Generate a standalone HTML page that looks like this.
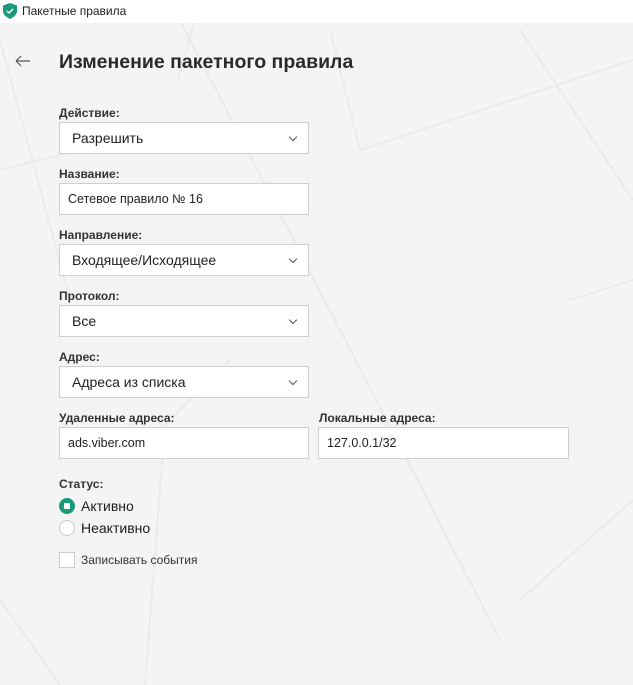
<!DOCTYPE html>
<html><head><meta charset="utf-8"><style>
*{margin:0;padding:0;box-sizing:border-box}
body{width:633px;height:685px;background:#f4f4f4;font-family:"Liberation Sans",sans-serif;position:relative;overflow:hidden;color:#1d1d1b}
.tb{position:absolute;left:0;top:0;width:633px;height:23px;background:#fff;font-size:12px;}
.tb span{position:absolute;left:22px;top:4px}
.lbl{position:absolute;left:59px;font-size:12px;font-weight:bold;color:#333}
.f{position:absolute;height:32px;background:#fff;border:1px solid #cfcfcf;font-size:14px;padding-left:12px;line-height:30px;color:#222}
.f.s{font-size:12.5px;padding-left:8px}
.chev{position:absolute;right:12px;top:11px;width:6px;height:6px;border-right:1px solid #555;border-bottom:1px solid #555;transform:rotate(45deg)}
svg.bg{position:absolute;left:0;top:0}
</style></head><body>
<svg class="bg" width="633" height="685"><g stroke="#eaeaea" stroke-width="2" fill="none">
<line x1="0" y1="40" x2="70" y2="300"/><line x1="180" y1="20" x2="500" y2="640"/><line x1="120" y1="140" x2="0" y2="170"/><line x1="178" y1="80" x2="200" y2="0"/>
<line x1="330" y1="30" x2="360" y2="150"/><line x1="360" y1="150" x2="633" y2="60"/><line x1="520" y1="30" x2="633" y2="200"/><line x1="610" y1="20" x2="633" y2="0"/>
<line x1="165" y1="425" x2="145" y2="685"/><line x1="165" y1="425" x2="230" y2="360"/><line x1="570" y1="300" x2="633" y2="280"/><line x1="520" y1="600" x2="633" y2="500"/>
<line x1="0" y1="600" x2="60" y2="685"/></g></svg>
<div class="tb"><svg style="position:absolute;left:3px;top:3px" width="14" height="16" viewBox="0 0 14 16"><path d="M7 0L14 2.5V8C14 12 10 14.5 7 16C4 14.5 0 12 0 8V2.5Z" fill="#1a9a7a"/><path d="M4 8l2 2 4-4" stroke="#fff" stroke-width="1.5" fill="none"/></svg><span>Пакетные правила</span></div>
<svg style="position:absolute;left:15px;top:55px" width="16" height="12"><path d="M1 6H15M1 6L6 1M1 6L6 11" stroke="#555" stroke-width="1.2" fill="none"/></svg>
<div style="position:absolute;left:59px;top:51px;font-size:19.5px;font-weight:bold;color:#2a2a2a">Изменение пакетного правила</div>
<div class="lbl" style="top:106px">Действие:</div>
<div class="f" style="left:59px;top:122px;width:250px">Разрешить<i class="chev"></i></div>
<div class="lbl" style="top:167px">Название:</div>
<div class="f s" style="left:59px;top:183px;width:250px">Сетевое правило № 16</div>
<div class="lbl" style="top:228px">Направление:</div>
<div class="f" style="left:59px;top:244px;width:250px">Входящее/Исходящее<i class="chev"></i></div>
<div class="lbl" style="top:289px">Протокол:</div>
<div class="f" style="left:59px;top:305px;width:250px">Все<i class="chev"></i></div>
<div class="lbl" style="top:350px">Адрес:</div>
<div class="f" style="left:59px;top:366px;width:250px">Адреса из списка<i class="chev"></i></div>
<div class="lbl" style="top:411px">Удаленные адреса:</div>
<div class="lbl" style="top:411px;left:319px">Локальные адреса:</div>
<div class="f s" style="left:59px;top:427px;width:250px">ads.viber.com</div>
<div class="f s" style="left:318px;top:427px;width:251px">127.0.0.1/32</div>
<div class="lbl" style="top:477px">Статус:</div>
<div style="position:absolute;left:59px;top:498px;width:16px;height:16px;border-radius:50%;background:#1a9a7a"><div style="position:absolute;left:5px;top:5px;width:6px;height:6px;background:#fff;border-radius:1px"></div></div>
<div style="position:absolute;left:81px;top:498px;font-size:14px">Активно</div>
<div style="position:absolute;left:59px;top:520px;width:16px;height:16px;border-radius:50%;background:#fff;border:1px solid #ccc"></div>
<div style="position:absolute;left:81px;top:520px;font-size:14px">Неактивно</div>
<div style="position:absolute;left:59px;top:552px;width:16px;height:16px;background:#fff;border:1px solid #ccc"></div>
<div style="position:absolute;left:81px;top:553px;font-size:12px;color:#333">Записывать события</div>
</body></html>
